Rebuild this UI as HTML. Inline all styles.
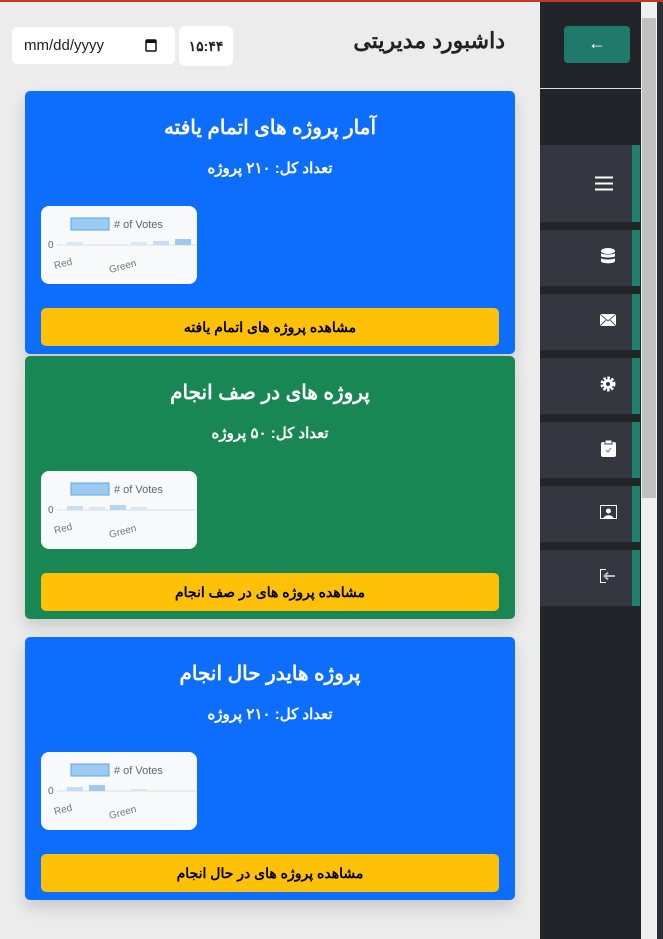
<!DOCTYPE html>
<html><head><meta charset="utf-8"><style>
*{box-sizing:border-box;margin:0;padding:0}
body{width:663px;height:939px;overflow:hidden;background:#ececec;font-family:"Liberation Sans","Noto Sans CJK SC",sans-serif;position:relative}
.abs{position:absolute}
.card{position:absolute;left:25px;width:490px;height:263px;border-radius:5px;box-shadow:0 8px 16px rgba(0,0,0,.15);color:#fff;direction:rtl;text-align:center}
.card h2{position:absolute;top:24px;left:0;right:0;font-size:20px;font-weight:bold}
.card .cnt{position:absolute;top:68px;left:0;right:0;font-size:15px;font-weight:bold}
.chart{position:absolute;left:16px;top:115px;width:156px;height:78px;background:#f8f9fa;border-radius:8px;direction:ltr;text-align:left}
.chart svg{direction:ltr}
.btn{position:absolute;left:16px;top:217px;width:458px;height:38px;background:#ffc107;border-radius:5px;color:#000;font-size:14px;line-height:38px;font-weight:bold}
.side{position:absolute;left:540px;width:92px;background:#343740}
.strip{position:absolute;left:632px;width:8px;background:#20806e}
</style></head><body>
<div class="abs" style="left:0;top:0;width:663px;height:2px;background:#c0392b"></div>
<div class="abs" style="left:12px;top:27px;width:163px;height:37px;background:#fff;border-radius:5px;font-size:15px;line-height:37px;padding-left:12px;color:#222">mm/dd/yyyy
<svg class="abs" style="left:133px;top:11px" width="12" height="14" viewBox="0 0 12 14"><rect x="1" y="2" width="10" height="11" rx="1" fill="none" stroke="#111" stroke-width="1.5"/><rect x="1" y="2" width="10" height="3" fill="#111"/></svg></div>
<div class="abs" style="left:179px;top:26px;width:54px;height:40px;background:#fff;border-radius:6px;font-size:14px;font-weight:bold;line-height:40px;text-align:center;color:#222">۱۵:۴۴</div>
<div class="abs" style="left:300px;top:28px;width:205px;text-align:right;font-size:22px;font-weight:bold;color:#222;direction:rtl">داشبورد مدیریتی</div>

<div class="abs" style="left:540px;top:2px;width:102px;height:937px;background:#212529"></div>
<div class="abs" style="left:564px;top:26px;width:66px;height:37px;background:#207a6b;border-radius:4px;color:#fff;text-align:center;line-height:35px;font-size:18px">←</div>
<div class="abs" style="left:540px;top:88px;width:101px;height:1px;background:#ddd"></div>
<div class="side" style="top:145px;height:77px"></div><div class="strip" style="top:145px;height:77px"></div>
<div class="side" style="top:230px;height:56px"></div><div class="strip" style="top:230px;height:56px"></div>
<div class="side" style="top:294px;height:56px"></div><div class="strip" style="top:294px;height:56px"></div>
<div class="side" style="top:358px;height:56px"></div><div class="strip" style="top:358px;height:56px"></div>
<div class="side" style="top:422px;height:56px"></div><div class="strip" style="top:422px;height:56px"></div>
<div class="side" style="top:486px;height:56px"></div><div class="strip" style="top:486px;height:56px"></div>
<div class="side" style="top:550px;height:56px"></div><div class="strip" style="top:550px;height:56px"></div>
<svg class="abs" style="left:595px;top:176px" width="18" height="15"><path d="M0 1.5H18M0 7.5H18M0 13.5H18" stroke="#fff" stroke-width="2"/></svg>
<svg class="abs" style="left:601px;top:248px" width="14" height="16"><ellipse cx="7" cy="3" rx="7" ry="3" fill="#fff"/><path d="M0 5v3c0 2 14 2 14 0V5c0 2-14 2-14 0zM0 10v3c0 3 14 3 14 0v-3c0 2-14 2-14 0z" fill="#fff"/></svg>
<svg class="abs" style="left:600px;top:314px" width="16" height="12"><rect width="16" height="12" fill="#fff"/><path d="M0 0L8 7L16 0M0 12L6 6M16 12L10 6" stroke="#555" fill="none"/></svg>
<svg class="abs" style="left:600px;top:376px" width="16" height="16" viewBox="0 0 16 16"><circle cx="8" cy="8" r="5.5" fill="none" stroke="#fff" stroke-width="4" stroke-dasharray="2.2 1.4"/><circle cx="8" cy="8" r="5" fill="#fff"/><circle cx="8" cy="8" r="2" fill="#343740"/></svg>
<svg class="abs" style="left:601px;top:440px" width="15" height="17"><rect x="0" y="2" width="15" height="15" rx="2" fill="#fff"/><rect x="4" y="0" width="7" height="4" fill="#fff" stroke="#343740"/><path d="M5 10l2 2 3-4" stroke="#8a4fa0" fill="none"/></svg>
<svg class="abs" style="left:600px;top:505px" width="17" height="15"><rect x="0.5" y="0.5" width="16" height="13" fill="none" stroke="#fff"/><circle cx="8.5" cy="6" r="2.5" fill="#fff"/><path d="M3 14c1-5 10-5 11 0z" fill="#fff"/></svg>
<svg class="abs" style="left:600px;top:569px" width="16" height="14"><path d="M6 .5H.5v13H6" stroke="#fff" fill="none"/><path d="M15 7H5M8 3.5L4.5 7 8 10.5" stroke="#bbb" stroke-width="2" fill="none"/></svg>
<div class="abs" style="left:641px;top:2px;width:16px;height:937px;background:#f0f0f0"></div>
<div class="abs" style="left:642px;top:18px;width:14px;height:480px;background:#c1c1c1"></div>
<div class="abs" style="left:657px;top:2px;width:6px;height:937px;background:#2b2e33"></div>

<div class="card" style="top:91px;background:#0d6efd">
<h2>آمار پروژه های اتمام یافته</h2><div class="cnt">تعداد کل: ۲۱۰ پروژه</div>
<div class="chart"><svg width="156" height="78"><rect x="30" y="12" width="38" height="12" fill="#9ccbf0" stroke="#5aa7e8"/><text x="73" y="22" font-size="11" fill="#666" font-family="Liberation Sans"># of Votes</text><text x="7" y="42" font-size="10" fill="#666" font-family="Liberation Sans">0</text><line x1="16" y1="39" x2="156" y2="39" stroke="#ddd"/><rect x="26" y="36" width="16" height="3" fill="#d6e8f8"/><rect x="90" y="36" width="16" height="3" fill="#d6e8f8"/><rect x="112" y="35" width="16" height="4" fill="#c4def5"/><rect x="134" y="33" width="16" height="6" fill="#9ccbf0"/><text x="14" y="63" font-size="10" fill="#777" transform="rotate(-15 14 63)" font-family="Liberation Sans">Red</text><text x="69" y="67" font-size="10" fill="#777" transform="rotate(-15 69 67)" font-family="Liberation Sans">Green</text></svg></div>
<div class="btn">مشاهده پروژه های اتمام یافته</div></div>

<div class="card" style="top:356px;background:#198754">
<h2>پروژه های در صف انجام</h2><div class="cnt">تعداد کل: ۵۰ پروژه</div>
<div class="chart"><svg width="156" height="78"><rect x="30" y="12" width="38" height="12" fill="#9ccbf0" stroke="#5aa7e8"/><text x="73" y="22" font-size="11" fill="#666" font-family="Liberation Sans"># of Votes</text><text x="7" y="42" font-size="10" fill="#666" font-family="Liberation Sans">0</text><line x1="16" y1="39" x2="156" y2="39" stroke="#ddd"/><rect x="26" y="35" width="16" height="4" fill="#c4def5"/><rect x="48" y="36" width="16" height="3" fill="#d6e8f8"/><rect x="69" y="34" width="16" height="5" fill="#b4d6f3"/><rect x="90" y="36" width="16" height="3" fill="#d6e8f8"/><text x="14" y="63" font-size="10" fill="#777" transform="rotate(-15 14 63)" font-family="Liberation Sans">Red</text><text x="69" y="67" font-size="10" fill="#777" transform="rotate(-15 69 67)" font-family="Liberation Sans">Green</text></svg></div>
<div class="btn">مشاهده پروژه های در صف انجام</div></div>

<div class="card" style="top:637px;background:#0d6efd">
<h2>پروژه هایدر حال انجام</h2><div class="cnt">تعداد کل: ۲۱۰ پروژه</div>
<div class="chart"><svg width="156" height="78"><rect x="30" y="12" width="38" height="12" fill="#9ccbf0" stroke="#5aa7e8"/><text x="73" y="22" font-size="11" fill="#666" font-family="Liberation Sans"># of Votes</text><text x="7" y="42" font-size="10" fill="#666" font-family="Liberation Sans">0</text><line x1="16" y1="39" x2="156" y2="39" stroke="#ddd"/><rect x="26" y="35" width="16" height="4" fill="#c4def5"/><rect x="48" y="33" width="16" height="6" fill="#9ccbf0"/><rect x="90" y="37" width="16" height="2" fill="#d6e8f8"/><text x="14" y="63" font-size="10" fill="#777" transform="rotate(-15 14 63)" font-family="Liberation Sans">Red</text><text x="69" y="67" font-size="10" fill="#777" transform="rotate(-15 69 67)" font-family="Liberation Sans">Green</text></svg></div>
<div class="btn">مشاهده پروژه های در حال انجام</div></div>
</body></html>
